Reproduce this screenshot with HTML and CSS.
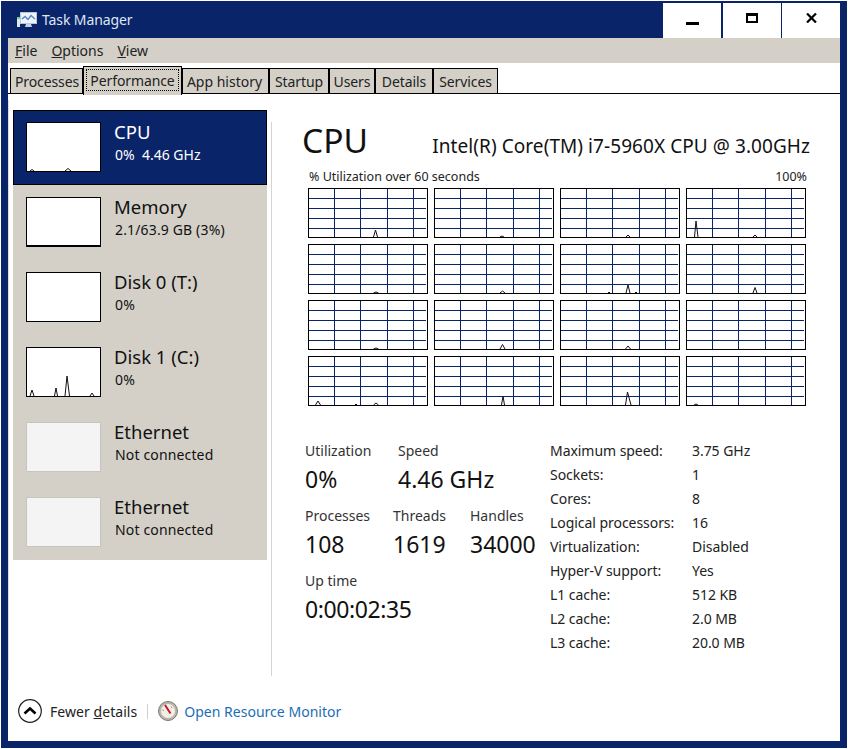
FILE: index.html
```html
<!DOCTYPE html>
<html lang="en">
<head>
<meta charset="utf-8">
<title>Task Manager</title>
<link rel="stylesheet" href="styles.css">
</head>
<body>
<svg class="defs" width="0" height="0" aria-hidden="true">
  <symbol id="grid" viewBox="0 0 120 50">
    <path class="gridline" d="M1 10.5H118M1 20.5H118M1 30.5H118M1 40.5H118M26.5 1V49M52.5 1V49M79.5 1V49M105.5 1V49"/>
    <rect class="cellframe" x="0.5" y="0.5" width="119" height="49"/>
  </symbol>
</svg>
<div class="window">
  <header class="titlebar">
    <svg class="appicon" viewBox="0 0 20 18" width="20" height="18">
      <rect x="3.500" y="1.500" width="16" height="11" fill="#eef4fa" stroke="#b4c8dc"/>
      <path d="M5 8l3-2.500 3 3 3-4 4 3.500" fill="none" stroke="#4f86c6" stroke-width="1.300"/>
      <path d="M9 13h5l1 3H8z" fill="#c6d2de"/>
      <rect x="0" y="6" width="3" height="10" fill="#dfe6ec"/>
      <rect x="0" y="6" width="3" height="2" fill="#6fd08c"/>
    </svg>
    <span class="apptitle">Task Manager</span>
    <div class="winbtns">
      <button class="winbtn"><span class="ic-min"></span></button>
      <button class="winbtn"><span class="ic-max"></span></button>
      <button class="winbtn">
        <svg viewBox="0 0 11 10" width="11" height="10"><path d="M1 0.5L10 9.5M10 0.5L1 9.5" stroke="#000" stroke-width="2.2" fill="none"/></svg>
      </button>
    </div>
  </header>
  <nav class="menubar">
    <span class="menuitem"><u>F</u>ile</span>
    <span class="menuitem"><u>O</u>ptions</span>
    <span class="menuitem"><u>V</u>iew</span>
  </nav>
  <div class="tabs">
    <span class="tab t1">Processes</span>
    <span class="tab t2 active"><span class="focus">Performance</span></span>
    <span class="tab t3">App history</span>
    <span class="tab t4">Startup</span>
    <span class="tab t5">Users</span>
    <span class="tab t6">Details</span>
    <span class="tab t7">Services</span>
  </div>
  <main class="main">
    <aside class="sidebar">
      <div class="item selected">
        <svg class="thumb" viewBox="1 1 73 48"><path class="spark" d="M4 49L6 47.5L8 49M39 49L42 46.5L45 49"/></svg>
        <div class="itemtext"><div class="iname">CPU</div><div class="isub">0%&nbsp; 4.46 GHz</div></div>
      </div>
      <div class="item">
        <svg class="thumb mem" viewBox="1 1 73 47"></svg>
        <div class="itemtext"><div class="iname">Memory</div><div class="isub">2.1/63.9 GB (3%)</div></div>
      </div>
      <div class="item">
        <svg class="thumb" viewBox="1 1 73 48"></svg>
        <div class="itemtext"><div class="iname">Disk 0 (T:)</div><div class="isub">0%</div></div>
      </div>
      <div class="item">
        <svg class="thumb" viewBox="1 1 73 48"><path class="spark" d="M4 49L6 43L8 49M28.5 49L30 41L31.5 49M39 49L41 29L43.5 49M64 49L66 46L68 49"/></svg>
        <div class="itemtext"><div class="iname">Disk 1 (C:)</div><div class="isub">0%</div></div>
      </div>
      <div class="item">
        <div class="thumb off"></div>
        <div class="itemtext"><div class="iname">Ethernet</div><div class="isub">Not connected</div></div>
      </div>
      <div class="item">
        <div class="thumb off"></div>
        <div class="itemtext"><div class="iname">Ethernet</div><div class="isub">Not connected</div></div>
      </div>
    </aside>
    <section class="detail">
      <div class="heading">
        <span class="bigtitle">CPU</span>
        <span class="cpumodel">Intel(R) Core(TM) i7-5960X CPU @ 3.00GHz</span>
      </div>
      <div class="graphcap"><span>% Utilization over 60 seconds</span><span>100%</span></div>
      <div class="graphs">
        <svg class="cell" viewBox="0 0 120 50"><use href="#grid"/><path class="spark" d="M65.500 49L67.500 42L69.500 49"/></svg>
        <svg class="cell" viewBox="0 0 120 50"><use href="#grid"/><path class="spark" d="M66 49L68 48L70 49"/></svg>
        <svg class="cell" viewBox="0 0 120 50"><use href="#grid"/><path class="spark" d="M66 49L68 47L70 49"/></svg>
        <svg class="cell" viewBox="0 0 120 50"><use href="#grid"/><path class="spark" d="M8.500 49L10 33L12 49M67 49L69 47L71 49"/></svg>
        <svg class="cell" viewBox="0 0 120 50"><use href="#grid"/><path class="spark" d="M65.500 49L68 48L70.500 49"/></svg>
        <svg class="cell" viewBox="0 0 120 50"><use href="#grid"/><path class="spark" d="M66 49L68.500 47L71 49"/></svg>
        <svg class="cell" viewBox="0 0 120 50"><use href="#grid"/><path class="spark" d="M48 49L49 48L50 49M66 49L68 41L70 49M75 49L76 48L77 49"/></svg>
        <svg class="cell" viewBox="0 0 120 50"><use href="#grid"/><path class="spark" d="M67 49L69 43.500L71 49"/></svg>
        <svg class="cell" viewBox="0 0 120 50"><use href="#grid"/><path class="spark" d="M65.500 49L68 48L70.500 49"/></svg>
        <svg class="cell" viewBox="0 0 120 50"><use href="#grid"/><path class="spark" d="M66 49L68.500 44.500L71 49"/></svg>
        <svg class="cell" viewBox="0 0 120 50"><use href="#grid"/><path class="spark" d="M65.500 49L68 46L70.500 49"/></svg>
        <svg class="cell" viewBox="0 0 120 50"><use href="#grid"/></svg>
        <svg class="cell" viewBox="0 0 120 50"><use href="#grid"/><path class="spark" d="M7.500 49L10 45L12.500 49M47 49L48 48L49 49M65.500 49L68 47L70.500 49"/></svg>
        <svg class="cell" viewBox="0 0 120 50"><use href="#grid"/><path class="spark" d="M67.500 49L69 40L70.500 49"/></svg>
        <svg class="cell" viewBox="0 0 120 50"><use href="#grid"/><path class="spark" d="M65.500 49L67.500 36L71 49"/></svg>
        <svg class="cell" viewBox="0 0 120 50"><use href="#grid"/><path class="spark" d="M8 49L10 48L12 49"/></svg>
      </div>
      <div class="stats">
        <div class="leftstats">
          <div class="statrow">
            <div class="stat w93"><div class="slabel">Utilization</div><div class="svalue">0%</div></div>
            <div class="stat"><div class="slabel">Speed</div><div class="svalue">4.46 GHz</div></div>
          </div>
          <div class="statrow">
            <div class="stat w88"><div class="slabel">Processes</div><div class="svalue">108</div></div>
            <div class="stat w77"><div class="slabel">Threads</div><div class="svalue">1619</div></div>
            <div class="stat"><div class="slabel">Handles</div><div class="svalue">34000</div></div>
          </div>
          <div class="statrow">
            <div class="stat"><div class="slabel">Up time</div><div class="svalue uptime">0:00:02:35</div></div>
          </div>
        </div>
        <dl class="specs">
          <dt>Maximum speed:</dt><dd>3.75 GHz</dd>
          <dt>Sockets:</dt><dd>1</dd>
          <dt>Cores:</dt><dd>8</dd>
          <dt>Logical processors:</dt><dd>16</dd>
          <dt>Virtualization:</dt><dd>Disabled</dd>
          <dt>Hyper-V support:</dt><dd>Yes</dd>
          <dt>L1 cache:</dt><dd>512 KB</dd>
          <dt>L2 cache:</dt><dd>2.0 MB</dd>
          <dt>L3 cache:</dt><dd>20.0 MB</dd>
        </dl>
      </div>
    </section>
  </main>
  <footer class="footer">
    <svg class="chev" viewBox="0 0 24 24" width="24" height="24">
      <circle cx="12" cy="12" r="11.300" fill="#fff" stroke="#222" stroke-width="1.200"/>
      <path d="M6.500 14.500L12 9.500L17.500 14.500" fill="none" stroke="#000" stroke-width="2.600"/>
    </svg>
    <span class="fewer">Fewer <u>d</u>etails</span>
    <span class="fsep"></span>
    <svg class="gauge" viewBox="0 0 20 20" width="20" height="20">
      <circle cx="10" cy="10" r="9.500" fill="#b9b5ad" stroke="#7d7a74"/>
      <circle cx="10" cy="10" r="7" fill="#f4efe6"/>
      <path d="M7 4L12.500 12.500" stroke="#c0182a" stroke-width="2"/>
      <path d="M13 5.500L14 7M4.500 9L6 9.500" stroke="#8a8a8a"/>
    </svg>
    <a class="monitor">Open Resource Monitor</a>
  </footer>
</div>
</body>
</html>
```

FILE: styles.css
```css
* { box-sizing: border-box; }
html, body { margin: 0; padding: 0; background: #fff; }
body { padding: 1px; font-family: "Noto Sans", "Open Sans", sans-serif; color: #000; }
.defs { position: absolute; }

.window {
  width: 846px;
  height: 747px;
  background: #fff;
  border: solid #0a246a;
  border-width: 0 7px 7px 7px;
  display: flex;
  flex-direction: column;
}

.titlebar {
  height: 37px;
  margin: 0 -7px;
  padding-left: 16px;
  background: #0a246a;
  display: flex;
  align-items: center;
  color: #dfe6f2;
}
.appicon { flex: none; margin-right: 5px; }
.apptitle { font-size: 14px; letter-spacing: -0.1px; }
.winbtns { margin-left: auto; margin-right: 7px; display: flex; height: 36px; padding-top: 1px; }
.winbtn {
  width: 58px;
  height: 35px;
  margin-left: 1px;
  padding: 0;
  border: 0;
  background: #fff;
  display: flex;
  align-items: center;
  justify-content: center;
}
.winbtn:nth-child(2) { margin-left: 2px; }
.ic-min { display: block; width: 13px; height: 3px; background: #000; margin-top: 7px; }
.ic-max { display: block; width: 12px; height: 10px; border: 2px solid #000; border-top-width: 3px; margin-top: -5px; }
.winbtn svg { margin-top: -5px; }

.menubar {
  height: 25px;
  background: #d4d0c8;
  display: flex;
  align-items: center;
  padding-left: 7px;
  gap: 14px;
  font-size: 14px;
  color: #222;
}

.tabs {
  height: 31px;
  display: flex;
  align-items: flex-end;
  padding-left: 2px;
  border-bottom: 1px solid #000;
  font-size: 14px;
  color: #222;
}
.tab {
  height: 25px;
  background: #d4d0c8;
  border: 1px solid #000;
  border-bottom: 0;
  display: flex;
  align-items: center;
  justify-content: center;
  white-space: nowrap;
  letter-spacing: -0.1px;
}
.t1 { width: 73px; padding-left: 1px; }
.t2 { width: 99px; }
.t3 { width: 87px; padding-right: 2px; letter-spacing: 0; }
.t4 { width: 60px; }
.t5 { width: 46px; }
.t6 { width: 58px; }
.t7 { width: 65px; }
.tab.active {
  height: 29px;
  margin-bottom: -2px;
  position: relative;
  z-index: 1;
  padding: 2px 2px 4px;
}
.focus {
  flex: 1;
  height: 100%;
  border: 1px dotted #000;
  display: flex;
  align-items: center;
  justify-content: center;
}

.main {
  height: 580px;
  margin-top: 6px;
  padding: 10px 0 0 4px;
  border-left: 1px solid #dcdcdc;
  display: flex;
}

.sidebar {
  width: 254px;
  height: 450px;
  background: #d4d0c8;
  flex: none;
}
.item {
  height: 75px;
  padding: 12px 13px;
  display: flex;
  gap: 13px;
  color: #111;
}
.item.selected {
  background: #0a246a;
  border: 1px solid #000;
  padding: 11px 12px;
  color: #fff;
}
.thumb {
  display: block;
  width: 75px;
  height: 50px;
  flex: none;
  background: #fff;
  border: 1px solid #000;
}
.thumb.mem { border-bottom-width: 2px; }
.thumb.off { background: #f5f4f5; border: 1px solid #c6c4bd; border-radius: 1px; }
.itemtext { min-width: 0; }
.iname { font-size: 18.500px; line-height: 20px; }
.isub { font-size: 14px; line-height: 22px; margin-top: 2px; letter-spacing: 0.15px; padding-left: 1px; }
.selected .isub { letter-spacing: 0; }
.spark { fill: none; stroke: #111; stroke-width: 1; }
.gridline { fill: none; stroke: #0a246a; stroke-width: 1; }
.cellframe { fill: none; stroke: #000; stroke-width: 1; }

.detail {
  width: 539px;
  height: 554px;
  margin: 12px 0 0 4px;
  border-left: 1px solid #d4d4d4;
}
.heading {
  height: 46px;
  padding: 0 0 0 30px;
  display: flex;
  align-items: baseline;
  justify-content: space-between;
}
.bigtitle { font-size: 33.500px; line-height: 36px; color: #111; }
.cpumodel { font-size: 19px; letter-spacing: 0.07px; color: #111; }
.graphcap {
  height: 20px;
  padding: 0 3px 4px 37px;
  display: flex;
  justify-content: space-between;
  align-items: center;
  font-size: 12.500px;
  color: #222;
}
.graphs {
  margin: 0 0 0 36px;
  width: 498px;
  display: grid;
  grid-template-columns: repeat(4, 120px);
  grid-auto-rows: 50px;
  gap: 6px;
}
.cell { display: block; width: 120px; height: 50px; overflow: hidden; }

.stats { display: flex; margin-top: 33px; }
.leftstats { width: 278px; padding-left: 33px; flex: none; }
.statrow { display: flex; height: 65px; }
.stat { flex: none; }
.w93 { width: 93px; }
.w88 { width: 88px; }
.w77 { width: 77px; }
.slabel { font-size: 14px; line-height: 22px; padding-top: 1px; color: #333; }
.svalue { font-size: 23px; line-height: 35px; color: #111; white-space: nowrap; }
.uptime { letter-spacing: -0.4px; }
.specs {
  margin: -1px 0 0;
  display: grid;
  grid-template-columns: 142px auto;
  grid-auto-rows: 24px;
  align-items: center;
  font-size: 14px;
  color: #222;
  letter-spacing: -0.05px;
}
.specs dt, .specs dd { margin: 0; white-space: nowrap; }

.footer {
  flex: 1;
  padding: 1px 0 0 10px;
  display: flex;
  align-items: center;
  font-size: 14px;
}
.chev { flex: none; margin: -1px 8px 0 0; }
.fewer { color: #222; letter-spacing: 0.05px; }
.fsep { width: 1px; height: 15px; background: #cfcfcf; margin: 0 10px; }
.gauge { flex: none; margin: -1px 6px 0 0; }
.monitor { color: #1a6fb5; letter-spacing: 0.02px; }
```
